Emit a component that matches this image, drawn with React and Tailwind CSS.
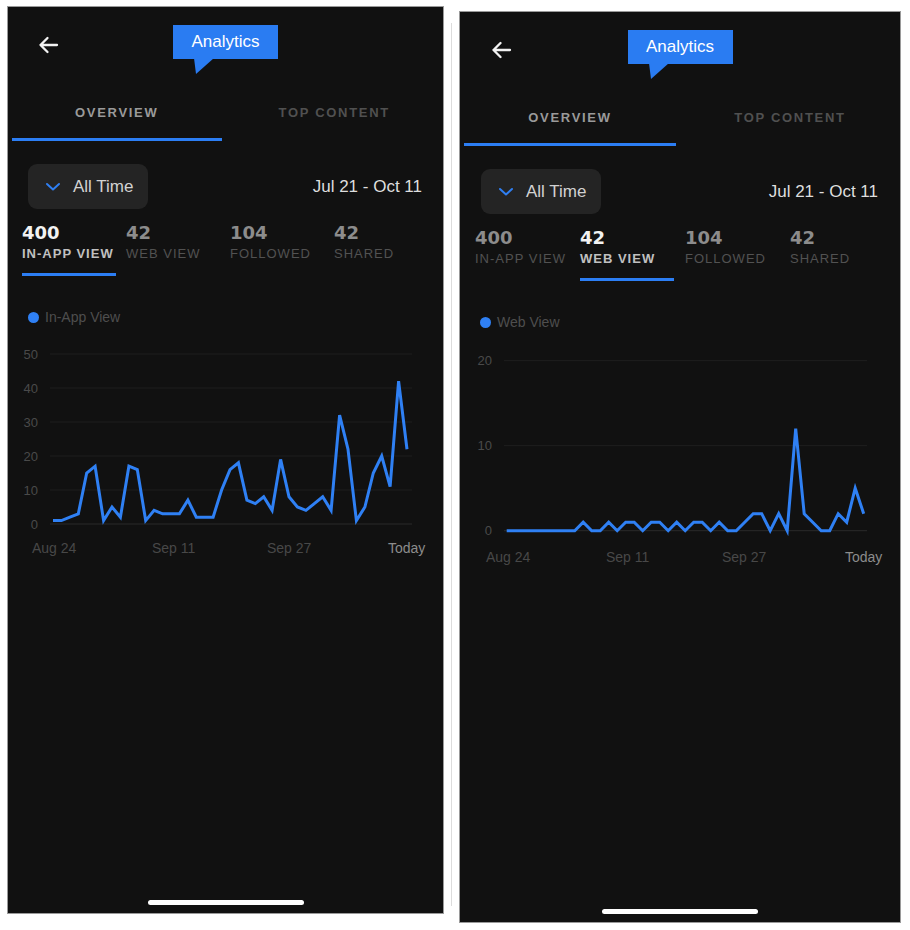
import React from 'react';

// daily counts read off the two charts
const inAppData = [1, 1, 2, 3, 15, 17, 1, 5, 2, 17, 16, 1, 4, 3, 3, 3, 7, 2, 2, 2, 10, 16, 18, 7, 6, 8, 4, 19, 8, 5, 4, 6, 8, 4, 32, 22, 1, 5, 15, 20, 11, 42, 22];
const webData = [0, 0, 0, 0, 0, 0, 0, 0, 0, 1, 0, 0, 1, 0, 1, 1, 0, 1, 1, 0, 1, 0, 1, 1, 0, 1, 0, 0, 1, 2, 2, 0, 2, 0, 12, 2, 1, 0, 0, 2, 1, 5, 2];

const stats = [
  { value: '400', label: 'IN-APP VIEW' },
  { value: '42', label: 'WEB VIEW' },
  { value: '104', label: 'FOLLOWED' },
  { value: '42', label: 'SHARED' },
];

const BLUE = '#2c7ef4';

function BackArrow() {
  return (
    <svg width="21" height="18" viewBox="0 0 21 18" fill="none">
      <path d="M19 9H2.5M9.5 2L2.5 9L9.5 16" stroke="#f2f2f2" strokeWidth="2.3" strokeLinecap="round" strokeLinejoin="round" />
    </svg>
  );
}

function Chevron() {
  return (
    <svg width="16" height="10" viewBox="0 0 16 10" fill="none">
      <path d="M2 2L8 7.5L14 2" stroke="#2f7ff2" strokeWidth="2" strokeLinecap="round" strokeLinejoin="round" />
    </svg>
  );
}

function Chart({ data, max, ticks, g }) {
  const font = 'Liberation Sans, Arial, sans-serif';
  const yOf = (v) => g.bottom - (v / max) * (g.bottom - g.top);
  const step = (g.lineX1 - g.lineX0) / (data.length - 1);
  const points = data.map((v, i) => `${(g.lineX0 + i * step).toFixed(1)},${yOf(v).toFixed(1)}`).join(' ');

  return (
    <svg width={g.width} height="230" className="mt-[12px] block">
      {ticks.map((t) => (
        <g key={t}>
          <line x1={g.gridX0} x2={g.gridX1} y1={yOf(t)} y2={yOf(t)} stroke={t === 0 ? '#2a2a2a' : '#1f1f1f'} strokeWidth="1" />
          <text x={g.yLabelRight} y={yOf(t) + 4.6} textAnchor="end" fontSize="13" fill="#4a4a4a" fontFamily={font}>
            {t}
          </text>
        </g>
      ))}
      <polyline points={points} fill="none" stroke="#2f80f4" strokeWidth="3" strokeLinejoin="miter" />
      {g.xLabels.map((l) => (
        <text key={l.t} x={l.x} y={g.labelY} fontSize="14" fill={l.t === 'Today' ? '#8c8c8c' : '#484848'} fontFamily={font}>
          {l.t}
        </text>
      ))}
    </svg>
  );
}

function Phone({ active, legend, data, max, ticks, chart, wide }) {
  return (
    <div
      className={`flex flex-col bg-[#111111] border border-[#9a9a9a] ${wide ? 'w-[442px] h-[912px] mt-[5px]' : 'w-[437px] h-[908px]'}`}
    >
      {/* header */}
      <div className="grid grid-cols-[1fr_auto_1fr] h-[90px]">
        <div className={`mt-[29px] ${wide ? 'ml-[31px]' : 'ml-[30px]'}`}>
          <BackArrow />
        </div>
        <div className="mt-[18px] flex flex-col">
          <div className="w-[105px] h-[34px] flex items-center justify-center text-[17px] text-white bg-[#2a7cf2]">
            Analytics
          </div>
          <svg width="22" height="17" viewBox="0 0 22 17" className="ml-[21px] -mt-px block">
            <polygon points="0,0 20,0 2,16" fill="#2a7cf2" />
          </svg>
        </div>
        <div />
      </div>

      {/* tabs */}
      <div className="grid grid-cols-2">
        <div className="flex flex-col items-center px-[4px]">
          <div className="pt-[8px] leading-[16px] text-[13px] font-bold tracking-[1.7px] text-[#9a9a9a]">OVERVIEW</div>
          <div className="mt-[17px] h-[3px] w-full" style={{ backgroundColor: BLUE }} />
        </div>
        <div className="flex flex-col items-center px-[4px]">
          <div className="pt-[8px] leading-[16px] text-[13px] font-bold tracking-[1.7px] text-[#505050]">TOP CONTENT</div>
          <div className="mt-[17px] h-[3px] w-full" />
        </div>
      </div>

      {/* range row */}
      <div className={`mt-[23px] flex items-center justify-between ${wide ? 'pl-[21px] pr-[22px]' : 'pl-[20px] pr-[21px]'}`}>
        <div className="w-[120px] h-[45px] rounded-[9px] bg-[#242424] flex items-center pl-[17px]">
          <Chevron />
          <span className="ml-[12px] text-[17px] text-[#d2d2d2]">All Time</span>
        </div>
        <div className="text-[17px] text-[#dedede]">Jul 21 - Oct 11</div>
      </div>

      {/* stats */}
      <div className={`mt-[13px] flex ${wide ? 'pl-[15px]' : 'pl-[14px]'}`}>
        {stats.map((s, i) => (
          <div key={s.label} className={`flex flex-col ${wide ? 'w-[105px]' : 'w-[104px]'}`}>
            <div
              className={`leading-[22px] text-[18px] font-bold font-['DejaVu_Sans',sans-serif] ${i === active ? 'text-[#f2f2f2]' : 'text-[#8c8c8c]'}`}
            >
              {s.value}
            </div>
            <div
              className={`mt-[2px] leading-[16px] text-[13px] tracking-[1px] whitespace-nowrap ${i === active ? 'font-bold text-[#c0c0c0]' : 'text-[#525252]'}`}
            >
              {s.label}
            </div>
            <div className={`mt-[11px] h-[3px] w-[94px] ${i === active ? 'bg-[#2c7ef4]' : ''}`} />
          </div>
        ))}
      </div>

      {/* legend */}
      <div className="mt-[33px] flex items-center h-[16px] pl-[20px]">
        <div className="w-[11px] h-[11px] rounded-full bg-[#2f80f4]" />
        <span className="ml-[6px] text-[14px] text-[#4e4e4e]">{legend}</span>
      </div>

      <Chart data={data} max={max} ticks={ticks} g={chart} />

      <div className="mt-auto mb-[8px] mx-auto w-[156px] h-[5px] rounded-full bg-white" />
    </div>
  );
}

export default function App() {
  return (
    <div className="w-[910px] h-[930px] bg-white flex items-start pl-[7px] pt-[6px] font-['Liberation_Sans',Arial,sans-serif]">
      <Phone
        active={0}
        legend="In-App View"
        data={inAppData}
        max={50}
        ticks={[50, 40, 30, 20, 10, 0]}
        chart={{
          width: 435,
          top: 17,
          bottom: 187,
          gridX0: 42,
          gridX1: 404,
          lineX0: 45,
          lineX1: 399,
          yLabelRight: 30,
          labelY: 216,
          xLabels: [
            { t: 'Aug 24', x: 24 },
            { t: 'Sep 11', x: 144 },
            { t: 'Sep 27', x: 259 },
            { t: 'Today', x: 380 },
          ],
        }}
      />
      <div className="ml-[7px] mt-[17px] w-px h-[883px] bg-[#dcdcdc]" />
      <div className="ml-[7px]">
        <Phone
          wide
          active={1}
          legend="Web View"
          data={webData}
          max={20}
          ticks={[20, 10, 0]}
          chart={{
            width: 440,
            top: 18.7,
            bottom: 188.7,
            gridX0: 44,
            gridX1: 407,
            lineX0: 46.7,
            lineX1: 403.7,
            yLabelRight: 32,
            labelY: 219.5,
            xLabels: [
              { t: 'Aug 24', x: 26 },
              { t: 'Sep 11', x: 146 },
              { t: 'Sep 27', x: 262 },
              { t: 'Today', x: 385 },
            ],
          }}
        />
      </div>
    </div>
  );
}
